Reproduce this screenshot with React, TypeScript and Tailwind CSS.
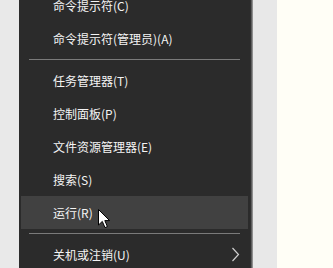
const items: (string | null)[] = [
  "命令提示符(C)",
  "命令提示符(管理员)(A)",
  null,
  "任务管理器(T)",
  "控制面板(P)",
  "文件资源管理器(E)",
  "搜索(S)",
  "运行(R)",
  null,
  "关机或注销(U)",
];

function Cursor() {
  return (
    <svg
      className="absolute left-[98px] top-[209px]"
      width="13"
      height="20"
      viewBox="0 0 13 20"
    >
      <path
        d="M0.5 0.5 L0.5 16 L4.3 12.4 L7 18.6 L9.4 17.6 L6.8 11.6 L11.6 11.6 Z"
        fill="#ffffff"
        stroke="#000000"
        strokeWidth="1"
        strokeLinejoin="round"
      />
    </svg>
  );
}

export default function App() {
  return (
    <div
      className="relative w-[333px] h-[268px] overflow-hidden flex bg-[#fffef6]"
      style={{ fontFamily: '"Noto Sans CJK SC", "Liberation Sans", sans-serif' }}
    >
      {/* desktop strip left */}
      <div className="w-[19px] shrink-0 bg-[#e9e9e9]" />

      {/* Win+X menu */}
      <div className="w-[231px] shrink-0 bg-[#2b2b2b] overflow-hidden">
        <div className="-mt-[11px] flex flex-col px-[2px]">
          {items.map((label, i) =>
            label === null ? (
              <div key={i} className="h-[9px] flex items-center px-[8px]">
                <div className="h-px w-full bg-[#7a7a7a]" />
              </div>
            ) : (
              <div
                key={i}
                className={`h-[33px] flex items-center justify-between pl-[32px] pr-[8px] text-[12px] text-[#f4f4f4] ${
                  label === "运行(R)" ? "bg-[#414141]" : ""
                }`}
              >
                <span>{label}</span>
                {label === "关机或注销(U)" && (
                  <svg width="9" height="15" viewBox="0 0 9 15">
                    <polyline
                      points="1.5,1 7.5,7.5 1.5,14"
                      fill="none"
                      stroke="#cfcfcf"
                      strokeWidth="1.2"
                    />
                  </svg>
                )}
              </div>
            )
          )}
        </div>
      </div>

      {/* menu shadow edge + desktop strip right */}
      <div className="w-[3px] shrink-0 bg-gradient-to-r from-[#1e1e1e] to-[#a8a8a8]" />
      <div className="w-[24px] shrink-0 bg-[#e8e8e8]" />
      <div className="flex-1 bg-[#fffef6]" />

      <Cursor />
    </div>
  );
}
